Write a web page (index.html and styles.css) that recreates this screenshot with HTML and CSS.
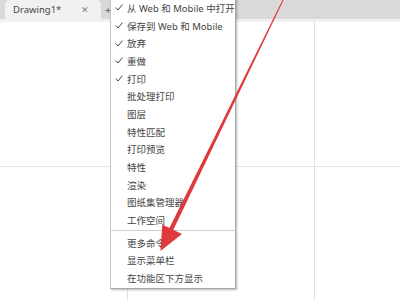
FILE: index.html
```html
<!DOCTYPE html>
<html lang="zh">
<head>
<meta charset="utf-8">
<link rel="stylesheet" href="styles.css">
</head>
<body>
<div class="app">
  <div class="tabbar">
    <div class="tab">
      <span class="tab-title">Drawing1*</span>
      <span class="tab-close">✕</span>
    </div>
    <span class="tab-add">+</span>
  </div>
  <div class="canvas">
    <div class="cell c1"></div><div class="cell c2"></div><div class="cell c3"></div>
    <div class="cell c1 low"></div><div class="cell c2 low"></div><div class="cell c3 low"></div>
  </div>

  <div class="menu">
    <div class="item"><span class="check"><svg width="8" height="7" viewBox="0 0 8 7"><path d="M0.8 3.6 L3 6 L7.4 0.6" fill="none" stroke="#444" stroke-width="1"/></svg></span>从 Web 和 Mobile 中打开</div>
    <div class="item"><span class="check"><svg width="8" height="7" viewBox="0 0 8 7"><path d="M0.8 3.6 L3 6 L7.4 0.6" fill="none" stroke="#444" stroke-width="1"/></svg></span>保存到 Web 和 Mobile</div>
    <div class="item"><span class="check"><svg width="8" height="7" viewBox="0 0 8 7"><path d="M0.8 3.6 L3 6 L7.4 0.6" fill="none" stroke="#444" stroke-width="1"/></svg></span>放弃</div>
    <div class="item"><span class="check"><svg width="8" height="7" viewBox="0 0 8 7"><path d="M0.8 3.6 L3 6 L7.4 0.6" fill="none" stroke="#444" stroke-width="1"/></svg></span>重做</div>
    <div class="item"><span class="check"><svg width="8" height="7" viewBox="0 0 8 7"><path d="M0.8 3.6 L3 6 L7.4 0.6" fill="none" stroke="#444" stroke-width="1"/></svg></span>打印</div>
    <div class="item"><span class="check"></span>批处理打印</div>
    <div class="item"><span class="check"></span>图层</div>
    <div class="item"><span class="check"></span>特性匹配</div>
    <div class="item"><span class="check"></span>打印预览</div>
    <div class="item"><span class="check"></span>特性</div>
    <div class="item"><span class="check"></span>渲染</div>
    <div class="item"><span class="check"></span>图纸集管理器</div>
    <div class="item"><span class="check"></span>工作空间</div>
    <div class="sep"></div>
    <div class="item"><span class="check"></span>更多命令</div>
    <div class="item"><span class="check"></span>显示菜单栏</div>
    <div class="item"><span class="check"></span>在功能区下方显示</div>
  </div>

  <svg class="arrow" width="400" height="300" viewBox="0 0 400 300">
    <polygon points="283.5,-2 284.4,-1.6 171.8,233 167.8,231.2" fill="#e0393b"/>
    <polygon points="160.5,251 162.3,224.5 182,234" fill="#e0393b"/>
  </svg>
</div>
</body>
</html>
```
FILE: styles.css
```css
html, body {
  margin: 0;
  padding: 0;
  background: #ffffff;
}
.app {
  position: relative;
  width: 400px;
  height: 300px;
  overflow: hidden;
  font-family: "Noto Sans", "Noto Sans CJK SC", sans-serif;
  display: flex;
  flex-direction: column;
}
.tabbar {
  height: 19px;
  background: #d9d9d9;
  display: flex;
  align-items: flex-start;
  padding-left: 5px;
  border-bottom: 3px solid #f1f1f1;
  flex: none;
}
.tab {
  width: 96px;
  height: 19px;
  background: #f1f1f1;
  border-radius: 5px 5px 0 0;
  display: flex;
  align-items: center;
  box-sizing: border-box;
  padding: 0 0 1px 8px;
}
.tab-title {
  font-size: 9.5px;
  color: #444;
  flex: 1;
}
.tab-close {
  font-size: 9px;
  color: #808080;
  margin-right: 12px;
}
.tab-add {
  font-size: 11px;
  color: #666;
  margin-left: 4px;
  line-height: 19px;
}
.canvas {
  flex: 1;
  display: grid;
  grid-template-columns: 128px 187px 1fr;
  grid-template-rows: 145px 1fr;
}
.cell {
  border-bottom: 1px solid #e6e6e6;
}
.cell.low {
  border-bottom: none;
}
.c1, .c2 {
  border-right: 1px solid #e0e0e0;
  box-sizing: border-box;
}
.menu {
  position: absolute;
  left: 110px;
  top: -2px;
  width: 126px;
  box-sizing: border-box;
  background: #ffffff;
  border: 1px solid #c8c8c8;
  border-right-color: #a8a8a8;
  border-bottom-color: #a8a8a8;
  box-shadow: 1px 1px 2px rgba(0,0,0,0.28);
  padding-bottom: 1px;
}
.item {
  height: 17.7px;
  display: flex;
  align-items: center;
  font-size: 9.5px;
  color: #444;
  white-space: nowrap;
}
.check {
  width: 16px;
  padding-left: 4px;
  box-sizing: border-box;
  display: flex;
  align-items: center;
}
.sep {
  height: 1px;
  background: #d0d0d0;
  margin: 1px 0 3px;
}
.arrow {
  position: absolute;
  left: 0;
  top: 0;
  pointer-events: none;
}
```
